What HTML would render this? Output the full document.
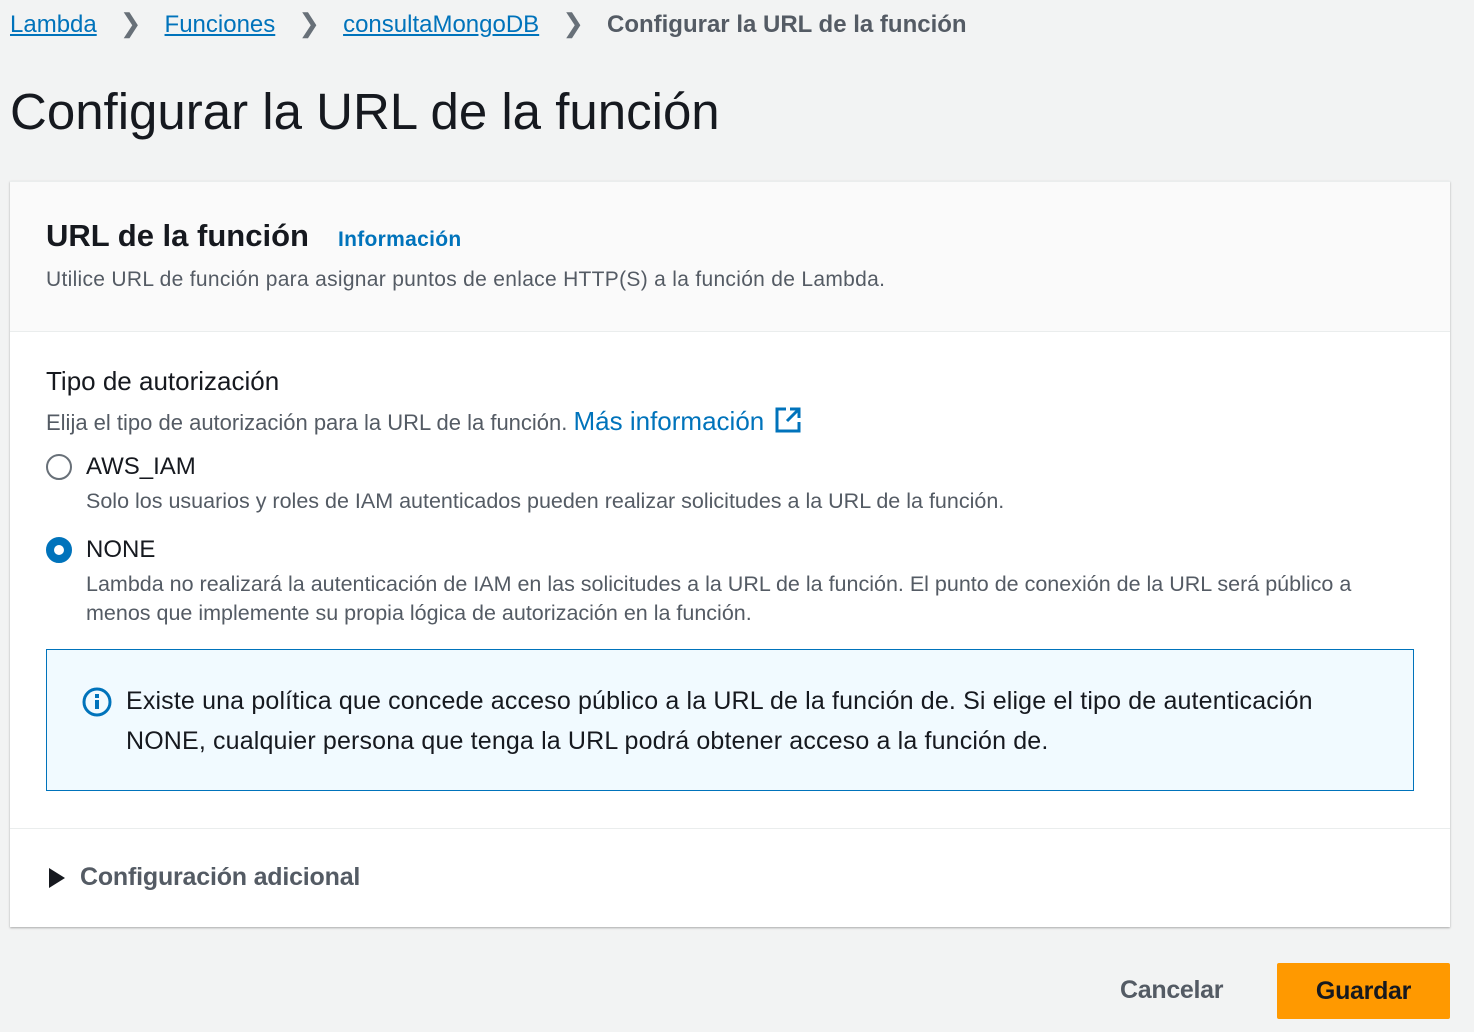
<!DOCTYPE html>
<html><head><meta charset="utf-8"><style>
*{margin:0;padding:0;box-sizing:border-box}
body{width:1474px;height:1032px;background:#f2f3f3;font-family:"Liberation Sans",sans-serif;color:#16191f;position:relative;overflow:hidden}
.a{position:absolute;white-space:nowrap}
.bc{top:8px;left:10px;font-size:24px}
.bc a{color:#0073bb;text-decoration:underline}
.bc .s{color:#687078;margin:0 23px;font-size:26px}
.bc .c{color:#545b64;font-weight:bold}
h1{position:absolute;left:10px;top:82px;font-size:51px;font-weight:normal}
.card{position:absolute;left:10px;top:181px;width:1440px;height:746px;background:#fff;box-shadow:0 1px 2px rgba(0,0,0,.3);border-top:1px solid #eaeded}
.hd{height:150px;background:#fafafa;border-bottom:1px solid #eaeded}
.gray{color:#545b64}
</style></head><body>
<div class="a bc"><a>Lambda</a><span class="s">&#x276F;</span><a>Funciones</a><span class="s">&#x276F;</span><a>consultaMongoDB</a><span class="s">&#x276F;</span><span class="c">Configurar la URL de la función</span></div>
<h1>Configurar la URL de la función</h1>
<div class="card">
<div class="hd"></div>
<div style="position:absolute;left:0;top:646px;width:1440px;border-top:1px solid #eaeded"></div>
</div>
<div class="a" style="left:46px;top:218px;font-size:31px;font-weight:bold">URL de la función</div>
<div class="a" style="left:338px;top:228px;font-size:21px;font-weight:bold;color:#0073bb;letter-spacing:0.3px">Información</div>
<div class="a gray" style="left:46px;top:268px;font-size:21px;letter-spacing:0.3px">Utilice URL de función para asignar puntos de enlace HTTP(S) a la función de Lambda.</div>
<div class="a" style="left:46px;top:366px;font-size:26px">Tipo de autorización</div>
<div class="a gray" style="left:46px;top:406px;font-size:22px">Elija el tipo de autorización para la URL de la función. <span style="color:#0073bb;font-size:26px">Más información</span>
<svg width="28" height="28" viewBox="0 0 28 28" style="vertical-align:-4px;margin-left:4px"><path d="M12 3H3v22h22v-9M16 3h9v9M25 3L13 15" fill="none" stroke="#0073bb" stroke-width="3"/></svg></div>
<div class="a" style="left:46px;top:454px;width:26px;height:26px;border:2px solid #687078;border-radius:50%"></div>
<div class="a" style="left:86px;top:453px;font-size:24px">AWS_IAM</div>
<div class="a gray" style="left:86px;top:489px;font-size:21.5px">Solo los usuarios y roles de IAM autenticados pueden realizar solicitudes a la URL de la función.</div>
<div class="a" style="left:46px;top:537px;width:26px;height:26px;border:8px solid #0073bb;border-radius:50%;background:#fff"></div>
<div class="a" style="left:86px;top:536px;font-size:24px">NONE</div>
<div class="a gray" style="left:86px;top:570px;font-size:21.5px;line-height:29px">Lambda no realizará la autenticación de IAM en las solicitudes a la URL de la función. El punto de conexión de la URL será público a<br>menos que implemente su propia lógica de autorización en la función.</div>
<div class="a" style="left:46px;top:649px;width:1368px;height:142px;background:#f1faff;border:1px solid #0073bb"></div>
<svg class="a" style="left:81px;top:686px" width="32" height="32" viewBox="0 0 32 32"><circle cx="16" cy="16" r="13" fill="none" stroke="#0073bb" stroke-width="3"/><rect x="14" y="14" width="4" height="9" fill="#0073bb"/><rect x="14" y="8" width="4" height="4" fill="#0073bb"/></svg>
<div class="a" style="left:126px;top:681px;font-size:25px;line-height:40px;letter-spacing:0.15px">Existe una política que concede acceso público a la URL de la función de. Si elige el tipo de autenticación<br>NONE, cualquier persona que tenga la URL podrá obtener acceso a la función de.</div>
<svg class="a" style="left:49px;top:868px" width="16" height="20"><path d="M0 0L16 10L0 20Z" fill="#16191f"/></svg>
<div class="a" style="left:80px;top:863px;font-size:25px;font-weight:bold;color:#545b64;letter-spacing:-0.2px">Configuración adicional</div>
<div class="a" style="left:1120px;top:976px;font-size:25px;font-weight:bold;color:#545b64;letter-spacing:-0.3px">Cancelar</div>
<div class="a" style="left:1277px;top:963px;width:173px;height:56px;background:#ff9900;border-radius:2px;font-size:25px;font-weight:bold;text-align:center;line-height:56px;letter-spacing:-0.3px">Guardar</div>
</body></html>
